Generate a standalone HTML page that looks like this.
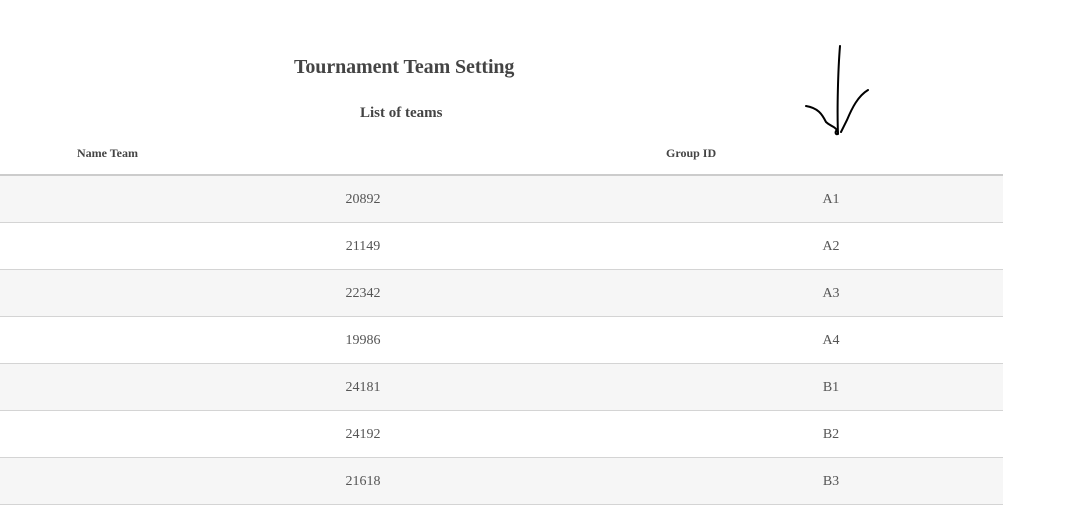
<!DOCTYPE html>
<html><head><style>
body{margin:0;width:1081px;height:510px;background:#fff;font-family:"Liberation Serif",serif;color:#444;position:relative;overflow:hidden}
.t{position:absolute;white-space:nowrap}
.row{position:absolute;left:0;width:1003px;height:46px;border-bottom:1px solid #d4d4d4}
.row span{position:absolute;top:16px;font-size:14px;color:#555;transform:translateX(-50%)}
</style></head><body>
<div class="t" style="left:294px;top:56px;font-size:20px;font-weight:bold;letter-spacing:-0.1px">Tournament Team Setting</div>
<div class="t" style="left:360px;top:105px;font-size:15px;font-weight:bold">List of teams</div>
<div class="t" style="left:77px;top:146px;font-size:12px;font-weight:bold">Name Team</div>
<div class="t" style="left:666px;top:146px;font-size:12px;font-weight:bold">Group ID</div>
<div style="position:absolute;left:0;top:174px;width:1003px;height:2px;background:#ccc"></div>
<div class="row" style="top:176px;background:#f6f6f6"><span style="left:363px">20892</span><span style="left:831px">A1</span></div>
<div class="row" style="top:223px"><span style="left:363px">21149</span><span style="left:831px">A2</span></div>
<div class="row" style="top:270px;background:#f6f6f6"><span style="left:363px">22342</span><span style="left:831px">A3</span></div>
<div class="row" style="top:317px"><span style="left:363px">19986</span><span style="left:831px">A4</span></div>
<div class="row" style="top:364px;background:#f6f6f6"><span style="left:363px">24181</span><span style="left:831px">B1</span></div>
<div class="row" style="top:411px"><span style="left:363px">24192</span><span style="left:831px">B2</span></div>
<div class="row" style="top:458px;background:#f6f6f6"><span style="left:363px">21618</span><span style="left:831px">B3</span></div>
<svg style="position:absolute;left:0;top:0" width="1081" height="510">
<g fill="none" stroke="#000" stroke-width="2" stroke-linecap="round">
<path d="M840 46 C838 70 837 110 838 134"/>
<path d="M806 106 C818 108 822 114 826 122 C830 126 834 126 837 130 C840 136 834 135 836 131"/>
<path d="M868 90 C858 96 852 108 847 120 L841 132"/>
</g></svg>
</body></html>
